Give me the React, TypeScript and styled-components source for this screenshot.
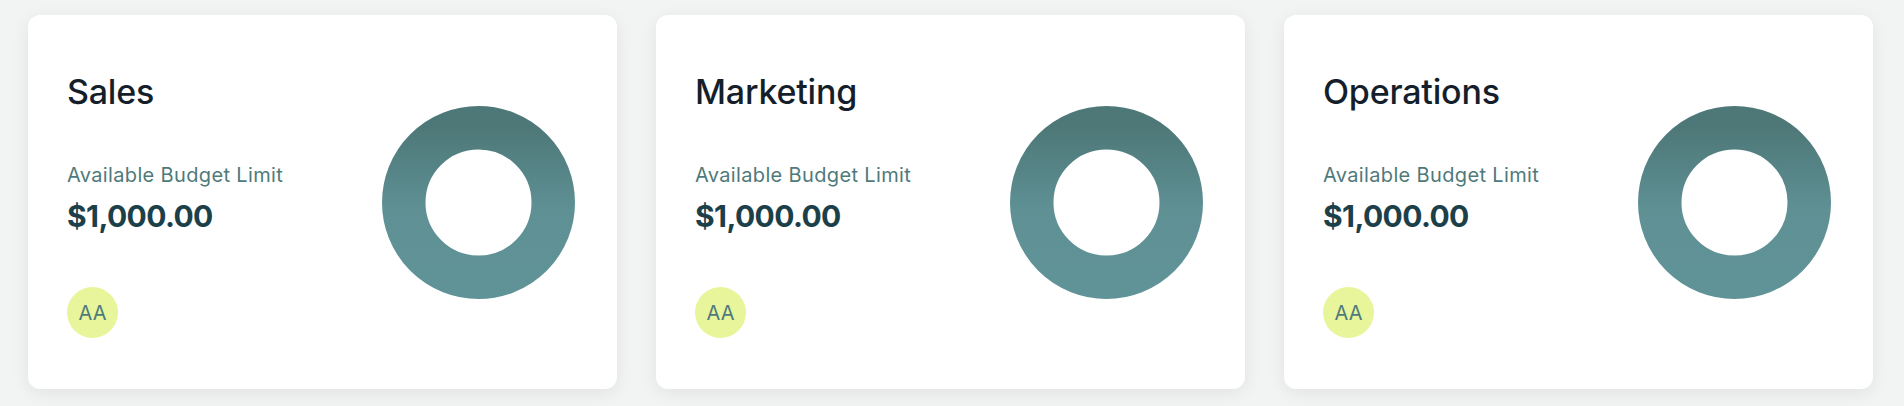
import React from "react";
import styled, { createGlobalStyle } from "styled-components";

const GlobalStyle = createGlobalStyle`
  html, body { margin: 0; padding: 0; background: #f2f3f3; }
  body { font-family: Inter, "Noto Sans", sans-serif; }
`;

const Page = styled.div`
  display: grid;
  grid-template-columns: repeat(3, 1fr);
  gap: 39px;
  padding: 15px 31px 17px 28px;
`;

const Card = styled.section`
  background: #ffffff;
  border-radius: 12px;
  box-shadow: 0 4px 18px rgba(20, 40, 40, 0.07);
  height: 374px;
  box-sizing: border-box;
  padding: 57px 42px 0 39px;
  display: flex;
  align-items: center;
  justify-content: space-between;
`;

const Info = styled.div`
  display: flex;
  flex-direction: column;
  align-self: flex-start;
`;

const Title = styled.h2`
  margin: 0;
  font-size: 34px;
  line-height: 40px;
  font-weight: 500;
  color: #151f2b;
  letter-spacing: -0.2px;
`;

const Label = styled.div`
  margin-top: 49px;
  font-size: 20px;
  line-height: 28px;
  color: #4f7a7b;
  letter-spacing: 0.35px;
`;

const Amount = styled.div`
  margin-top: 9px;
  font-size: 30px;
  line-height: 36px;
  font-weight: 700;
  color: #1c4049;
  letter-spacing: -0.6px;
`;

const Avatar = styled.div`
  margin-top: 53px;
  width: 51px;
  height: 51px;
  border-radius: 50%;
  background: #e8f59b;
  color: #4f7a7b;
  font-size: 20px;
  display: flex;
  align-items: center;
  justify-content: center;
`;

const DonutSvg = styled.svg`
  width: 193px;
  height: 193px;
  flex-shrink: 0;
  margin-top: -57px;
`;

const Donut: React.FC<{ id: string }> = ({ id }) => (
  <DonutSvg viewBox="0 0 193 193">
    <defs>
      <linearGradient id={id} x1="0" y1="0" x2="0" y2="1">
        <stop offset="0" stopColor="#4e7878" />
        <stop offset="0.55" stopColor="#5e9094" />
        <stop offset="1" stopColor="#609397" />
      </linearGradient>
    </defs>
    <circle cx="96.5" cy="96.5" r="74.75" fill="none" stroke={`url(#${id})`} strokeWidth="43.5" />
  </DonutSvg>
);

const teams = ["Sales", "Marketing", "Operations"];

export default function App() {
  return (
    <>
      <GlobalStyle />
      <Page>
        {teams.map((t, i) => (
          <Card key={t}>
            <Info>
              <Title>{t}</Title>
              <Label>Available Budget Limit</Label>
              <Amount>$1,000.00</Amount>
              <Avatar>AA</Avatar>
            </Info>
            <Donut id={`grad${i}`} />
          </Card>
        ))}
      </Page>
    </>
  );
}
